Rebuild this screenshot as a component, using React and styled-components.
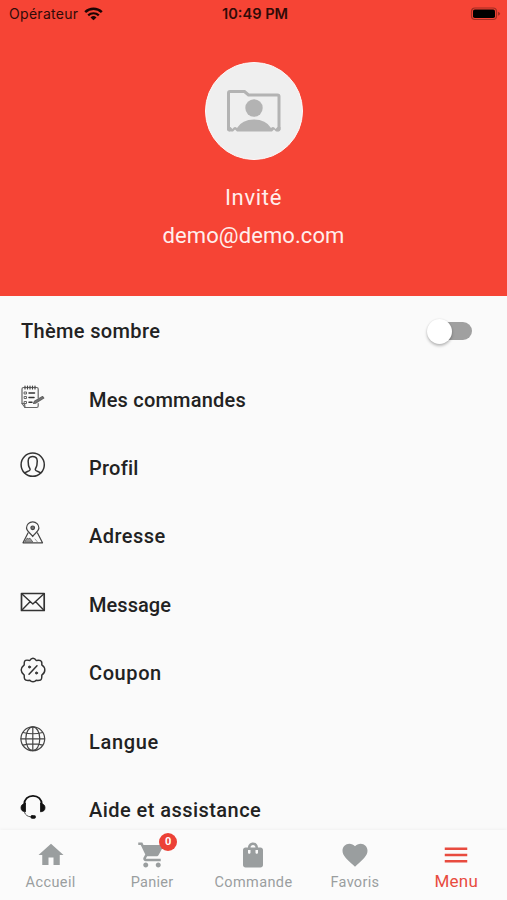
import React from "react";
import styled, { createGlobalStyle } from "styled-components";

const GlobalStyle = createGlobalStyle`
  body {
    margin: 0;
    background-color: #fafafa;
    font-family: Roboto, "Liberation Sans", sans-serif;
  }
`;

const Screen = styled.div`
  width: 507px;
  height: 900px;
  overflow: hidden;
  display: flex;
  flex-direction: column;
  background-color: #fafafa;
`;

const Header = styled.header`
  height: 296px;
  flex-shrink: 0;
  background-color: #f64435;
`;

const StatusBar = styled.div`
  height: 27px;
  padding: 0 6px 0 9px;
  box-sizing: border-box;
  display: grid;
  grid-template-columns: 1fr 70px 1fr;
  align-items: center;
  font-family: Inter, sans-serif;
  font-size: 14px;
  color: #300b08;
`;

const Carrier = styled.div`
  display: flex;
  align-items: center;
  gap: 6px;
  letter-spacing: 0.3px;
`;

const Clock = styled.div`
  font-size: 14.6px;
  font-weight: 600;
  text-align: center;
  white-space: nowrap;
`;

const BatteryWrap = styled.div`
  display: flex;
  justify-content: flex-end;
`;

const Account = styled.div`
  padding-top: 35px;
  display: flex;
  flex-direction: column;
  align-items: center;
  color: #ffeeec;
`;

const Avatar = styled.div`
  width: 98px;
  height: 98px;
  margin-bottom: 19px;
  box-sizing: border-box;
  border: 1px solid #fffafa;
  border-radius: 50%;
  background-color: #efefef;
  display: flex;
  align-items: center;
  justify-content: center;
`;

const AccountText = styled.div`
  line-height: 38px;
  font-size: 22px;
  letter-spacing: ${(props) => props.$spacing};
`;

const Content = styled.main`
  flex: 1;
  min-height: 0;
  overflow: hidden;
`;

const Row = styled.div`
  height: 68.4px;
  padding: 0 35px 0 20px;
  display: flex;
  align-items: center;
`;

const ThemeRow = styled(Row)`
  justify-content: space-between;
  padding-left: 21px;
`;

const RowIcon = styled.div`
  width: 26px;
  height: 26px;
  margin: 0 43px 4px 0;
`;

const RowText = styled.div`
  padding-top: 2px;
  font-size: 20px;
  font-weight: 500;
  color: #222;
  white-space: nowrap;
  letter-spacing: ${(props) => props.$spacing};
`;

const SwitchTrack = styled.div`
  width: 36px;
  height: 18px;
  margin-top: 2px;
  border-radius: 9px;
  background-color: #a0a0a0;
  display: flex;
  align-items: center;
`;

const SwitchThumb = styled.div`
  width: 25px;
  height: 25px;
  flex-shrink: 0;
  margin-left: -9px;
  border-radius: 50%;
  background-color: #fff;
  box-shadow: 0 2px 3px rgba(0, 0, 0, 0.25), 0 0 2px rgba(0, 0, 0, 0.1);
`;

const TabBar = styled.nav`
  height: 70px;
  flex-shrink: 0;
  display: grid;
  grid-template-columns: repeat(5, 1fr);
  background-color: #fbfbfb;
  box-shadow: 0 -1px 3px rgba(0, 0, 0, 0.04);
`;

const Tab = styled.div`
  display: flex;
  flex-direction: column;
  align-items: center;
  color: ${(props) => (props.$active ? "#e84b3f" : "#9a9e9f")};
`;

const TabIcon = styled.div`
  position: relative;
  width: 30px;
  height: 30px;
  margin-top: 10px;
`;

const TabText = styled.div`
  margin-top: ${(props) => (props.$active ? "1px" : "3px")};
  font-size: ${(props) => (props.$active ? "17px" : "14.5px")};
  line-height: 20px;
  letter-spacing: ${(props) => props.$spacing};
  white-space: nowrap;
`;

const Badge = styled.div`
  position: absolute;
  top: -7px;
  left: 22px;
  width: 18px;
  height: 18px;
  border-radius: 50%;
  background-color: #ec4136;
  color: #fff;
  font-size: 11px;
  font-weight: 700;
  line-height: 18px;
  text-align: center;
`;

const Svg = styled.svg`
  display: block;
`;

const LineIcon = ({ children }) => (
  <Svg
    width="26"
    height="26"
    viewBox="0 0 26 26"
    fill="none"
    stroke="#333"
    strokeWidth="1.5"
    strokeLinecap="round"
    strokeLinejoin="round"
  >
    {children}
  </Svg>
);

const OrdersIcon = () => (
  <LineIcon>
    <g stroke="#666" strokeWidth="1.200">
      <path d="M18.200 14V5Q18.200 3.500 16.700 3.500H3.500Q2 3.500 2 5v14.500l3 4h11.700q1.500 0 1.500-1.500V19.500" />
      <path d="M2 19.500h2.500L5 23.500" />
      <path d="M5 2v3M7.500 2v3M10 2v3M12.500 2v3M15 2v3" stroke="#444" />
      <path d="M4.500 8h2v2h-2zM4.500 12.500h2v2h-2zM4.500 17.500h2v2h-2z" strokeWidth="1" />
      <path d="M9 9h5.500M9 13.500h5M9 18.300h3" stroke="#333" strokeWidth="1.500" />
      <path d="M13.500 19.500l1-2.200 8-4.800 1.300 1.600-8 5z" fill="#777" />
    </g>
  </LineIcon>
);

const ProfileIcon = () => (
  <LineIcon>
    <circle cx="12.700" cy="12.700" r="11.600" />
    <path d="M4.800 21c1-1.500 5.200-1.700 5.300-3.300.1-1.200-1-2-1.600-4.500C7.300 7.700 8.500 4.500 12.700 4.500s5.400 3.200 4.200 8.700c-.6 2.500-1.700 3.300-1.600 4.500.1 1.600 4.300 1.800 5.300 3.300" />
  </LineIcon>
);

const AddressIcon = () => (
  <LineIcon>
    <g stroke="#444" strokeWidth="1.200">
      <path d="M12.700 16.500C11.200 13.500 6.500 11.500 6.500 8a6.200 6.200 0 0 1 12.400 0c0 3.500-4.700 5.500-6.200 8.500z" />
      <circle cx="12.700" cy="7.800" r="1.800" fill="#777" />
      <path d="M8 13L3 22.800h19.500L17.500 13" />
      <path d="M5 21.500l2-3.300 1.500.6 1.500-.6 2.500 3.300z" fill="#999" strokeWidth=".7" />
      <path d="M15 19l2.500 3" strokeWidth=".8" stroke="#888" />
    </g>
  </LineIcon>
);

const MessageIcon = () => (
  <LineIcon>
    <path d="M1.500 4.500h22.700v17H1.500z" strokeWidth="1.700" />
    <path d="M2 5l10.850 10L23.700 5M2 21l8-8.200M23.700 21l-8-8.200" strokeWidth="1.400" />
  </LineIcon>
);

const CouponIcon = () => (
  <LineIcon>
    <path d="M13 1.200q2 0 3.200 2.300 4.500-.9 5.200.9.700 1.500.4 3.500 3 2 3 5.100t-3 5.100q.2 4.200-1.300 4.900-1.400.6-4.300.3Q15 24.800 13 24.800t-3.200-1.500q-4.200.5-4.900-.9-.8-1.500-.7-4.300-3-2.500-3-5.100t3-5.100q-.1-3.500.7-4.200 1-1 4.900-.2Q11 1.200 13 1.200z" />
    <path d="M17 8.700l-8 8.600" strokeWidth="1.500" />
    <circle cx="9.500" cy="10" r="1.100" fill="#333" strokeWidth=".8" />
    <circle cx="16.500" cy="16" r="1.100" fill="#333" strokeWidth=".8" />
  </LineIcon>
);

const LanguageIcon = () => (
  <LineIcon>
    <g stroke="#444" strokeWidth="1.200">
      <circle cx="12.800" cy="12.800" r="11.900" />
      <ellipse cx="12.800" cy="12.800" rx="7" ry="11.900" />
      <path d="M12.800 1v23.600M1 12.800h23.600M3 6.500q9.800 2.500 19.600 0M3 19.100q9.800-2.500 19.600 0" />
    </g>
  </LineIcon>
);

const HelpIcon = () => (
  <LineIcon>
    <g stroke="#111">
      <path d="M4.200 10.500C4.200 5 8 1.800 13 1.800s8.800 3.200 8.800 8.700" strokeWidth="1.800" />
      <path d="M5.500 9.500v8.300Q1 17.500 1 13.700t4.500-4.200zM20.500 9.500v8.300q4.500-.3 4.500-4.100t-4.500-4.200z" fill="#111" strokeWidth=".8" />
      <path d="M4.500 18.500q1.500 4 6 4.300" strokeWidth="1" stroke="#555" />
      <rect x="10.800" y="21.500" width="4.800" height="2.900" rx="1.300" fill="#111" strokeWidth=".6" />
    </g>
  </LineIcon>
);

const WifiIcon = () => (
  <Svg width="19" height="14" viewBox="0 0 19 14" fill="none" stroke="#1c0504">
    <path d="M1.200 5.200a12 12 0 0 1 16.600 0" strokeWidth="2.500" />
    <path d="M4.200 8.400a7.600 7.600 0 0 1 10.600 0" strokeWidth="2.200" />
    <path d="M9.500 13.300L6.500 10.400a4.500 4.500 0 0 1 6 0z" fill="#1c0504" stroke="none" />
  </Svg>
);

const BatteryIcon = () => (
  <Svg width="31" height="14" viewBox="0 0 31 14">
    <rect x="1.500" y="1" width="25" height="11.500" rx="3.500" fill="none" stroke="#a22d23" strokeWidth="1.200" />
    <rect x="3" y="2.500" width="22" height="8.500" rx="1.800" fill="#000" />
    <path d="M28 4.700q2.200 1 2.200 2T28 8.800z" fill="#a22d23" />
  </Svg>
);

const AvatarIcon = () => (
  <Svg width="56" height="44" viewBox="0 0 56 44">
    <path
      d="M4 41Q2.500 41 2.500 39.500V4Q2.500 2.500 4 2.500h14.500l4 3.500H51.500Q53 6 53 7.500v32q0 1.500-1.500 1.500"
      fill="none"
      stroke="#b3b3b3"
      strokeWidth="3"
    />
    <circle cx="28" cy="19" r="8.700" fill="#b3b3b3" />
    <path
      d="M1 38l3.500 0 2 2q2-3.500 4.500-1 5-8.500 17-8.500t17 8.500q2.500-2.500 4.500 1l2-2h3v3q-1 2-4.500 1.500l-2-2-2 2H11l-2-2-2 2q-5 .5-6-1.500z"
      fill="#b3b3b3"
    />
  </Svg>
);

const FilledIcon = ({ d }) => (
  <Svg width="30" height="30" viewBox="0 0 24 24" fill="currentColor">
    <path d={d} />
  </Svg>
);

const menuItems = [
  { text: "Mes commandes", icon: <OrdersIcon />, spacing: "0.2px" },
  { text: "Profil", icon: <ProfileIcon />, spacing: "0.25px" },
  { text: "Adresse", icon: <AddressIcon />, spacing: "0.45px" },
  { text: "Message", icon: <MessageIcon />, spacing: "0.05px" },
  { text: "Coupon", icon: <CouponIcon />, spacing: "0.6px" },
  { text: "Langue", icon: <LanguageIcon />, spacing: "0.65px" },
  { text: "Aide et assistance", icon: <HelpIcon />, spacing: "0.45px" },
];

const tabs = [
  { text: "Accueil", spacing: "0.4px", d: "M10 20v-6h4v6h5v-8h3L12 3 2 12h3v8z" },
  {
    text: "Panier",
    spacing: "0.3px",
    badge: "0",
    d: "M7 18c-1.100 0-1.990.9-1.990 2S5.900 22 7 22s2-.9 2-2-.9-2-2-2zM1 2v2h2l3.600 7.590-1.350 2.450c-.16.28-.25.61-.25.96 0 1.100.9 2 2 2h12v-2H7.420c-.14 0-.25-.11-.25-.25l.03-.12.9-1.630h7.450c.75 0 1.410-.41 1.750-1.030l3.580-6.490c.08-.14.12-.31.12-.48 0-.55-.45-1-1-1H5.210l-.94-2H1zm16 16c-1.100 0-1.990.9-1.990 2s.89 2 1.990 2 2-.9 2-2-.9-2-2-2z",
  },
  {
    text: "Commande",
    spacing: "0.4px",
    d: "M18 6h-2c0-2.210-1.790-4-4-4S8 3.790 8 6H6c-1.100 0-2 .9-2 2v12c0 1.100.9 2 2 2h12c1.100 0 2-.9 2-2V8c0-1.100-.9-2-2-2zm-8 4c0 .55-.45 1-1 1s-1-.45-1-1V8h2v2zm2-6c1.100 0 2 .9 2 2h-4c0-1.100.9-2 2-2zm4 6c0 .55-.45 1-1 1s-1-.45-1-1V8h2v2z",
  },
  {
    text: "Favoris",
    spacing: "0.3px",
    d: "M12 21.350l-1.450-1.320C5.400 15.360 2 12.280 2 8.500 2 5.420 4.420 3 7.500 3c1.740 0 3.410.81 4.500 2.090C13.090 3.810 14.760 3 16.500 3 19.580 3 22 5.420 22 8.500c0 3.780-3.400 6.860-8.550 11.540L12 21.350z",
  },
  { text: "Menu", spacing: "0.2px", active: true, d: "M3 18h18v-2H3v2zm0-5h18v-2H3v2zm0-7v2h18V6H3z" },
];

function App() {
  return (
    <>
      <GlobalStyle />
      <Screen>
        <Header>
          <StatusBar>
            <Carrier>
              Opérateur
              <WifiIcon />
            </Carrier>
            <Clock>10:49 PM</Clock>
            <BatteryWrap>
              <BatteryIcon />
            </BatteryWrap>
          </StatusBar>
          <Account>
            <Avatar>
              <AvatarIcon />
            </Avatar>
            <AccountText $spacing="0.7px">Invité</AccountText>
            <AccountText $spacing="0.1px">demo@demo.com</AccountText>
          </Account>
        </Header>
        <Content>
          <ThemeRow>
            <RowText $spacing="0.35px">Thème sombre</RowText>
            <SwitchTrack>
              <SwitchThumb />
            </SwitchTrack>
          </ThemeRow>
          {menuItems.map((item) => (
            <Row key={item.text}>
              <RowIcon>{item.icon}</RowIcon>
              <RowText $spacing={item.spacing}>{item.text}</RowText>
            </Row>
          ))}
        </Content>
        <TabBar>
          {tabs.map((tab) => (
            <Tab key={tab.text} $active={tab.active}>
              <TabIcon>
                <FilledIcon d={tab.d} />
                {tab.badge && <Badge>{tab.badge}</Badge>}
              </TabIcon>
              <TabText $active={tab.active} $spacing={tab.spacing}>
                {tab.text}
              </TabText>
            </Tab>
          ))}
        </TabBar>
      </Screen>
    </>
  );
}

export default App;
